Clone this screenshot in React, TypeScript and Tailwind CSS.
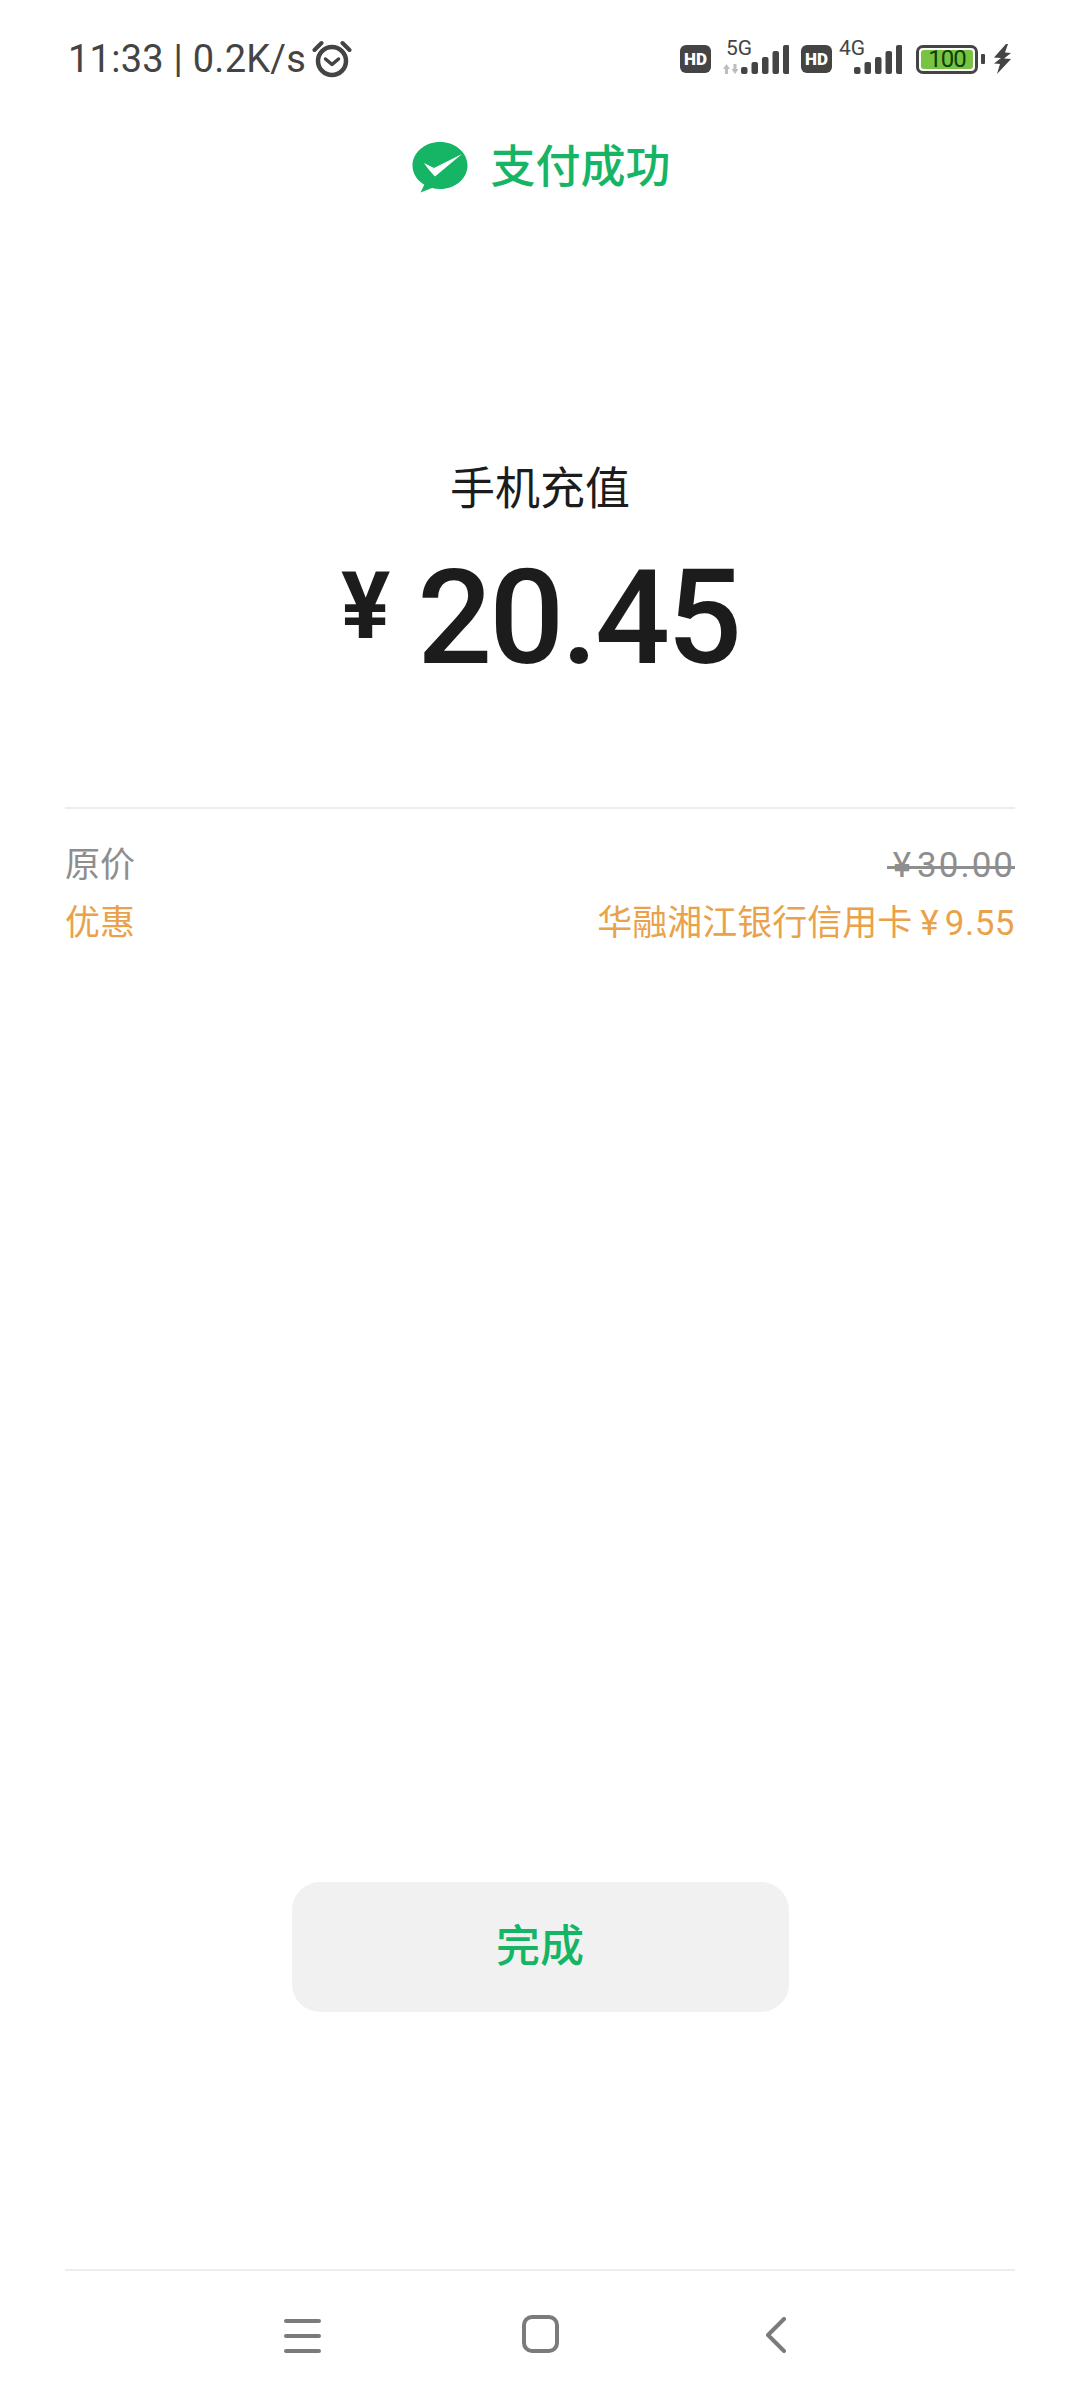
const cjk = "font-['Roboto','Noto_Sans_CJK_SC',sans-serif]";

function Alarm() {
  return (
    <svg width="40" height="38" viewBox="0 0 40 38" fill="none" stroke="#444" strokeLinecap="round" strokeLinejoin="round">
      <circle cx="20" cy="21" r="14" strokeWidth="4.500" />
      <path d="M13.5 19l6.500 5.500 6.500-5.500" strokeWidth="3.500" />
      <path d="M2.500 10 9.500 3M37.500 10 30.500 3" strokeWidth="4" />
    </svg>
  );
}

function Hd() {
  return (
    <div className="w-[31px] h-[28px] rounded-[6px] bg-[#444] flex items-center justify-center text-white text-[17px] leading-none font-black font-['Roboto',sans-serif]">HD</div>
  );
}

function Signal({ label, arrows }: { label: string; arrows?: boolean }) {
  const bars = [
    [18, 22, 7],
    [28.5, 17, 12],
    [39, 12, 17],
    [49.5, 6, 23],
    [60, 0, 29],
  ];
  return (
    <div className="relative w-[66px] h-[46px]">
      <span className="absolute left-[3px] top-0 text-[21px] leading-[24px] text-[#444] font-['Roboto',sans-serif]">{label}</span>
      <svg width="66" height="29" viewBox="0 0 66 29" className="absolute left-0 top-[9px]">
        {bars.map(([x, y, h]) => (
          <rect key={x} x={x} y={y} width="6.500" height={h} rx="2" fill="#444" />
        ))}
        {arrows && (
          <path d="M0 24 3.500 19 7 24H5v5H2v-5zM8.500 24h2v-5h3v5h2L12 29z" fill="#bdbdbd" />
        )}
      </svg>
    </div>
  );
}

function Battery() {
  return (
    <div className="flex items-center">
      <div className="w-[62px] h-[29px] rounded-[7px] border-[3px] border-[#444] p-[2px] flex">
        <div className="flex-1 rounded-[3px] bg-[#76c442] flex items-center justify-center text-[24px] tracking-[-1px] leading-none text-[#0f3d05] font-['Roboto',sans-serif]">100</div>
      </div>
      <div className="ml-[3px] w-[4px] h-[10px] rounded-[1px] bg-[#444]" />
    </div>
  );
}

function Bolt() {
  return (
    <svg width="18" height="30" viewBox="0 0 18 30">
      <path d="M12 0 0 13.500l7 .5-7 5.500 6 .5-3 10 14-15-7-.5 7-5.500-6-.5 3-8.500z" fill="#444" />
    </svg>
  );
}

function WeChatPay() {
  return (
    <svg width="56" height="51" viewBox="0 0 56 51">
      <path d="M28 0C12.800 0 .5 10.600.5 23.500c0 8 4.600 15 11.800 19.300L8.500 50.500 20 46c2.500.6 5.200 1 8 1 15.200 0 27.500-10.500 27.500-23.500S43.200 0 28 0z" fill="#15b565" />
      <path d="M12 21 22 26 50 12 23 34.500C19 30 15 26 12 21z" fill="#fff" />
    </svg>
  );
}

export default function App() {
  return (
    <div className={`w-[1080px] h-[2400px] bg-white flex flex-col ${cjk}`}>
      <div className="h-[118px] pl-[68px] pr-[68px] flex items-center justify-between">
        <div className="flex items-center gap-[6px] text-[38px] leading-none text-[#444]">
          <span className="tracking-[0.25px]">11:33 | 0.2K/s</span>
          <Alarm />
        </div>
        <div className="flex items-center">
          <Hd />
          <div className="w-[12px]" />
          <Signal label="5G" arrows />
          <div className="w-[12px]" />
          <Hd />
          <div className="w-[4px]" />
          <Signal label="4G" />
          <div className="w-[14px]" />
          <Battery />
          <div className="w-[9px]" />
          <Bolt />
        </div>
      </div>

      <div className="h-[98px] pl-[3px] flex items-center justify-center gap-[22px] text-[45px] leading-none font-medium text-[#15b565]">
        <WeChatPay />
        <span>支付成功</span>
      </div>

      <div className="mt-[242px] flex flex-col items-center text-[#1c1c1c]">
        <div className="text-[45px] leading-[64px]">手机充值</div>
        <div className="mt-[21px] flex items-start h-[151px]">
          <span className="mt-[9px] text-[92px] leading-[110px] font-bold">¥</span>
          <span className="ml-[27px] text-[132px] tracking-[-3px] leading-[150px] font-medium">20.45</span>
        </div>
      </div>

      <div className="mt-[113px] mx-[65px] border-t-[2px] border-[#ededed] pt-[28px] text-[35px]">
        <div className="flex justify-between items-center h-[58px] leading-[58px] text-[#8e8e8e]">
          <span>原价</span>
          <span className="relative flex pl-[6px]">
            <span>¥</span>
            <span className="ml-[6px] tracking-[2px]">30.00</span>
            <span className="absolute left-0 right-0 top-[29px] h-[3px] bg-[#8e8e8e]" />
          </span>
        </div>
        <div className="flex justify-between items-center h-[58px] leading-[58px] text-[#e9a24a]">
          <span>优惠</span>
          <span className="flex">
            <span>华融湘江银行信用卡</span>
            <span className="ml-[8px]">¥</span>
            <span className="ml-[6px] tracking-[0.5px]">9.55</span>
          </span>
        </div>
      </div>

      <div className="mt-[929px] flex justify-center">
        <button className="w-[497px] h-[130px] rounded-[28px] bg-[#f1f1f1] text-[44px] font-medium text-[#15b565]">完成</button>
      </div>

      <div className="mt-[257px] mx-[65px] border-t-[2px] border-[#ededed] h-[130px] flex items-start">
        <div className="ml-[219px] mt-[48px] w-[37px] flex flex-col gap-[11px]">
          <div className="h-[4px] rounded-full bg-[#7b7b7b]" />
          <div className="h-[4px] rounded-full bg-[#7b7b7b]" />
          <div className="h-[4px] rounded-full bg-[#7b7b7b]" />
        </div>
        <div className="ml-[201px] mt-[44px] w-[37px] h-[38px] rounded-[10px] border-[4px] border-[#7b7b7b]" />
        <svg className="ml-[206px] mt-[46px]" width="22" height="36" viewBox="0 0 22 36" fill="none" stroke="#7b7b7b" strokeWidth="4" strokeLinecap="round" strokeLinejoin="round">
          <path d="M19 2 3 18l16 16" />
        </svg>
      </div>
    </div>
  );
}
